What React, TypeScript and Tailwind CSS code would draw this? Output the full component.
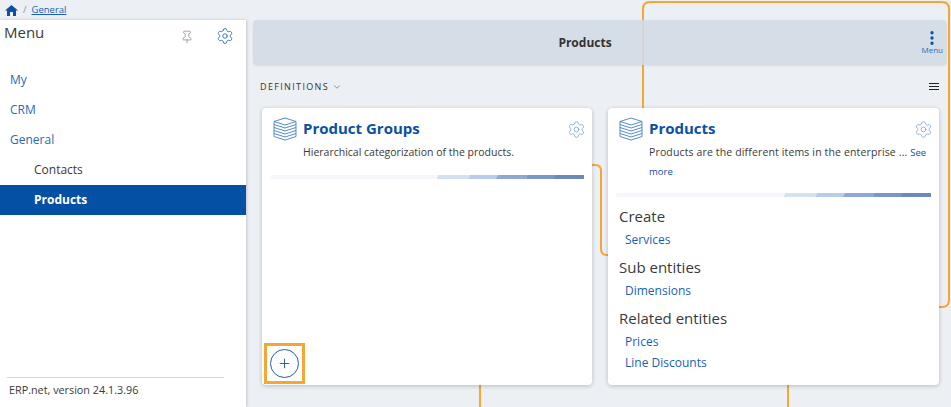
import { Settings, Pin, ChevronDown, Plus, EllipsisVertical } from "lucide-react";

const font = { fontFamily: '"Open Sans", "Noto Sans", sans-serif' };

const StackIcon = () => (
  <svg width="24" height="24" viewBox="0 0 24 24" fill="none" stroke="#3a76bf" strokeWidth="0.85" className="shrink-0">
    <path d="M12 1 L23 4.5 L12 8 L1 4.5 Z" />
    <path d="M1 7.5 L12 11 L23 7.5" />
    <path d="M1 10.5 L12 14 L23 10.5" />
    <path d="M1 13.5 L12 17 L23 13.5" />
    <path d="M1 16.5 L12 20 L23 16.5" />
    <path d="M1 4.5 V19.5 L12 23 L23 19.5 V4.5" />
  </svg>
);

const Stripe = () => (
  <div className="h-1 bg-[#f5f7fc] flex justify-end overflow-hidden">
    <div className="w-[150px] h-full shrink-0 bg-[linear-gradient(115deg,#f5f7fc_0%,#f5f7fc_3%,#d3e1f3_3%,#d3e1f3_24%,#b9cde8_24%,#b9cde8_42%,#8fa9d4_42%,#8fa9d4_62%,#7c96c6_62%,#7c96c6_80%,#6d88bb_80%)]" />
  </div>
);

const CardHead = ({ title, children }: { title: string; children: React.ReactNode }) => (
  <div className="flex pl-[11px] pr-[6px] pt-[9px]">
    <StackIcon />
    <div className="ml-[6px] flex-1 min-w-0">
      <div className="-mt-[1px] text-[15px] leading-[24px] font-bold text-[#0b50a5]">{title}</div>
      {children}
    </div>
    <Settings size={19} strokeWidth={0.9} className="text-[#6c9ad6] mt-[3px] shrink-0" />
  </div>
);

const Section = ({ title, links }: { title: string; links: string[] }) => (
  <div className="mb-[5px]">
    <div className="text-[15px] leading-[25px] text-[#3a3a3a]">{title}</div>
    {links.map((l) => (
      <div key={l} className="pl-[6px] text-[12px] leading-[21px] text-[#1a5fb4]">
        {l}
      </div>
    ))}
  </div>
);

export default function App() {
  return (
    <div className="relative w-[951px] h-[407px] overflow-hidden bg-[#eceff4] flex flex-col" style={font}>
      {/* orange tour connectors, they run behind the cards */}
      <svg width="951" height="407" fill="none" stroke="#f5a733" strokeWidth="2" className="absolute left-0 top-0">
        <path d="M643 110 V9 Q643 2 650 2 H942 Q949 2 949 9 V300 Q949 307 942 307 H930" />
        <path d="M590 165 H595 Q601 165 601 171 V249 Q601 255 607 255 H612" />
        <path d="M480 380 V407" />
        <path d="M788 380 V407" />
      </svg>

      <div className="relative h-5 flex items-center pl-[5px] text-[9.5px] shrink-0">
        <svg width="13" height="11" viewBox="0 0 13 11" fill="#0b50a5">
          <path d="M6.5 0 L13 5.5 H11 V11 H8 V7 H5 V11 H2 V5.5 H0 Z" />
        </svg>
        <span className="ml-[5px] text-[#8a8f98]">/</span>
        <span className="ml-[5px] text-[#1a5fb4] underline">General</span>
      </div>

      <div className="relative flex flex-1 min-h-0">
        <aside className="w-[246px] shrink-0 bg-white shadow-[1px_0_3px_rgba(0,0,0,0.18)] flex flex-col">
          <div className="flex items-start h-[45px] text-[#3a3a3a]">
            <div className="pl-1 text-[15px] leading-[24px] flex-1">Menu</div>
            <Pin size={14} strokeWidth={1.1} className="text-[#777] mt-[10px]" />
            <Settings size={18} strokeWidth={1.1} className="text-[#1a5fb4] ml-[22px] mr-[12px] mt-[7px]" />
          </div>
          <nav className="text-[12px]">
            <div className="h-[30px] flex items-center pl-[10px] text-[#2b69b8]">My</div>
            <div className="h-[30px] flex items-center pl-[10px] text-[#2b69b8]">CRM</div>
            <div className="h-[30px] flex items-center pl-[10px] text-[#2b69b8]">General</div>
            <div className="h-[30px] flex items-center pl-[34px] text-[#3a3a3a]">Contacts</div>
            <div className="h-[30px] flex items-center pl-[34px] bg-[#0450a4] text-white font-bold">Products</div>
          </nav>
          <div className="mt-auto ml-[7px] mr-[22px] h-[30px] border-t border-[#d8d8d8] pt-[4px] pl-[2px] text-[10.8px] leading-[16px] text-[#3a3a3a]">
            ERP.net, version 24.1.3.96
          </div>
        </aside>

        <main className="flex-1 min-w-0 pl-[7px] pr-1">
          <div className="h-[45px] bg-[#d3dae5]/90 rounded-[4px] shadow-[0_1px_2px_rgba(0,0,0,0.08)] flex items-center relative">
            <div className="flex-1 pr-[30px] text-center text-[12px] font-bold text-[#333]">Products</div>
            <div className="absolute right-[4px] top-[9px] flex flex-col items-center text-[#2b69b8]">
              <EllipsisVertical size={18} strokeWidth={2.4} className="text-[#0b50a5]" />
              <span className="text-[8px] leading-[8px] -mt-[1px]">Menu</span>
            </div>
          </div>

          <div className="h-[43px] flex items-center pl-[7px] pr-[2px] text-[#333]">
            <span className="text-[9px] tracking-[1.35px]">DEFINITIONS</span>
            <ChevronDown size={10} strokeWidth={1.2} className="ml-[3px]" />
            <div className="ml-auto mr-[6px] w-[10px] flex flex-col gap-[1.5px]">
              <div className="h-[1.5px] bg-[#222]" />
              <div className="h-[1.5px] bg-[#222]" />
              <div className="h-[1.5px] bg-[#222]" />
            </div>
          </div>

          <div className="flex pl-[9px] gap-[16px]">
            <section className="relative w-[330px] h-[277px] bg-white rounded-[4px] shadow-[0_1px_4px_rgba(0,0,0,0.22)]">
              <CardHead title="Product Groups">
                <p className="text-[10.5px] leading-[16px] text-[#3a3a3a] mt-[4px]">Hierarchical categorization of the products.</p>
              </CardHead>
              <div className="mt-[15px] mx-2">
                <Stripe />
              </div>
              <div className="absolute left-[2px] bottom-[1px] w-[41px] h-[41px] border-[3px] border-[#f5a733] flex items-center justify-center">
                <div className="w-[29px] h-[29px] rounded-full border border-[#1a5fb4] flex items-center justify-center">
                  <Plus size={15} strokeWidth={1.4} className="text-[#0b50a5]" />
                </div>
              </div>
            </section>

            <section className="w-[331px] h-[277px] bg-white rounded-[4px] shadow-[0_1px_4px_rgba(0,0,0,0.22)]">
              <CardHead title="Products">
                <p className="-mr-[25px] text-[10.5px] leading-[18px] text-[#3a3a3a] mt-[3px] tracking-[0.14px]">
                  Products are the different items in the enterprise ... <span className="text-[9.5px] tracking-normal text-[#0b50a5]">See more</span>
                </p>
              </CardHead>
              <div className="mt-[12px] mx-2">
                <Stripe />
              </div>
              <div className="px-[11px] mt-[7px]">
                <Section title="Create" links={["Services"]} />
                <Section title="Sub entities" links={["Dimensions"]} />
                <Section title="Related entities" links={["Prices", "Line Discounts"]} />
              </div>
            </section>
          </div>
        </main>
      </div>
    </div>
  );
}
